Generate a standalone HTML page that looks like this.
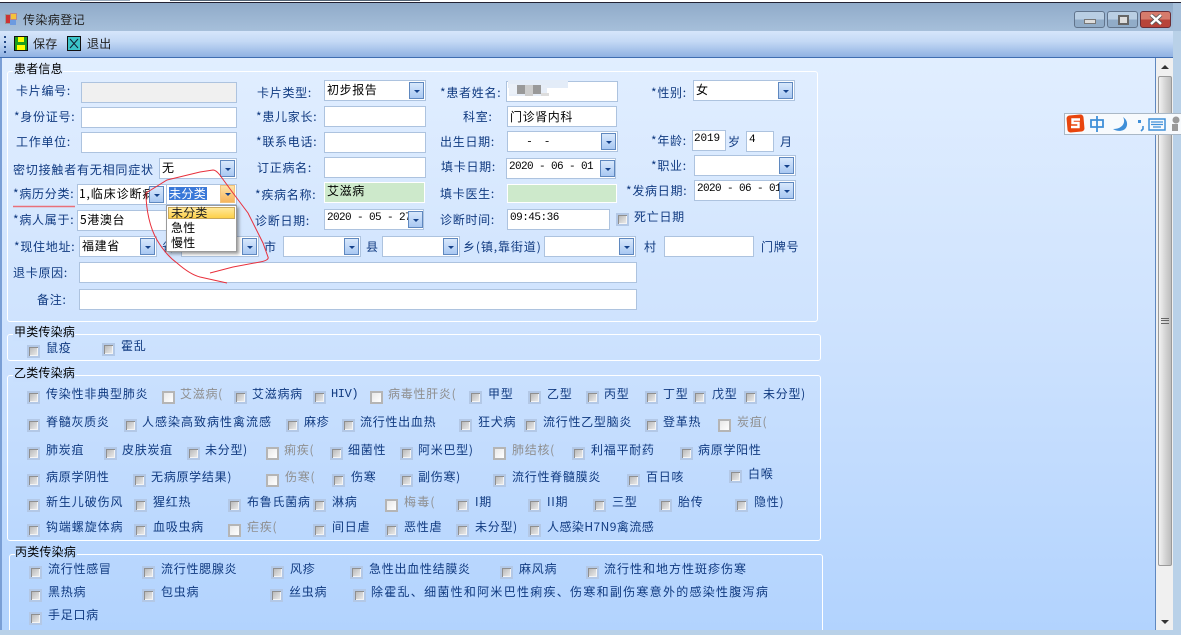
<!DOCTYPE html>
<html><head><meta charset="utf-8"><style>
html,body{margin:0;padding:0;width:1181px;height:635px;overflow:hidden;background:#b9d1e8}
body{position:relative;font:12px/14px "WenQuanYi Zen Hei","Noto Sans CJK SC",sans-serif;color:#103a80}
div,span,i,b{position:absolute;display:block;box-sizing:border-box;font-style:normal;font-weight:normal}
span{white-space:nowrap;height:14px;letter-spacing:.72px}
span.k{color:#000}
span.g{color:#8f8f8f}
.f{background:#fff;border:1px solid #adc3df;color:#000;padding:0 0 0 2px;white-space:nowrap;overflow:hidden;letter-spacing:.6px;line-height:17px}
.m{letter-spacing:-.6px;font-family:'Liberation Mono',monospace;font-size:11px}
.a{width:15px;height:17px;background:linear-gradient(#d8e8fc,#a9c8f2);border:1px solid #5f88bf}
.a:after{content:"";position:absolute;left:4px;top:7px;border:3px solid transparent;border-top:3px solid #15428b;border-bottom:0}
.o{background:linear-gradient(#fde3a8,#f6b45c);border-color:#f0c27c}
.c{width:13px;height:13px;border:2px solid #b3c8e6;background:linear-gradient(135deg,#b4b4b4,#efefef);box-shadow:inset 1px 1px 0 #8f8f8f,inset -1px -1px 0 #f4f4f4}
.d{width:13px;height:13px;border:2px solid #b5b5b5;background:linear-gradient(135deg,#e8e8e8,#fff)}
.gb{border:1px solid #fff;border-radius:3px}
.lg{background:#cfe3fe;height:13px}
</style></head><body>
<div style="left:0;top:0;width:1181px;height:2px;background:#fff"></div>
<div style="left:80px;top:0;width:50px;height:1px;background:#9ab"></div>
<div style="left:170px;top:0;width:250px;height:1px;background:#567"></div>
<div style="left:0;top:2px;width:1181px;height:1px;background:#223"></div>
<div style="left:0;top:3px;width:1181px;height:28px;background:linear-gradient(#90abc9,#a6bfda)"></div>
<div style="left:5px;top:14px;width:6px;height:10px;background:#c33;border:1px solid #999"></div>
<div style="left:10px;top:13px;width:7px;height:7px;background:#f5c33b;border:1px solid #b88"></div>
<div style="left:10px;top:20px;width:6px;height:5px;background:#6c9be0"></div>
<span style="left:23px;top:13px;color:#222;letter-spacing:.4px">传染病登记</span>
<div style="left:1074px;top:11px;width:31px;height:17px;border:1px solid #61748c;border-radius:3px;background:linear-gradient(#b9cee3 50%,#91acc8 50%)"><i style="left:9px;top:7px;width:12px;height:5px;background:#ddd;border:1px solid #777"></i></div>
<div style="left:1107px;top:11px;width:31px;height:17px;border:1px solid #61748c;border-radius:3px;background:linear-gradient(#b9cee3 50%,#91acc8 50%)"><i style="left:10px;top:3px;width:11px;height:10px;background:#ddd;border:2px solid #666"></i></div>
<div style="left:1140px;top:11px;width:31px;height:17px;border:1px solid #6b2d36;border-radius:3px;background:linear-gradient(#d67b6c 50%,#b8443a 50%)"></div>
<svg style="position:absolute;left:1149px;top:14px" width="14" height="11"><path d="M2 1L12 10M12 1L2 10" stroke="#555" stroke-width="4"/><path d="M2 1L12 10M12 1L2 10" stroke="#fff" stroke-width="2.4"/></svg>

<div style="left:0;top:31px;width:1174px;height:27px;background:linear-gradient(#d6e6fb,#c4d9f5 40%,#8fb1e2);border-bottom:1px solid #3f6db0"></div>
<div style="left:4px;top:36px;width:2px;height:2px;background:#244a88;box-shadow:0 5px #244a88,0 10px #244a88,0 15px #244a88"></div>
<div style="left:14px;top:36px;width:14px;height:15px;background:#1c9e1c;border:1px solid #111"><i style="left:3px;top:0;width:6px;height:5px;background:#ff0"></i><i style="left:2px;top:8px;width:8px;height:5px;background:#ff0"></i></div>
<span style="left:33px;top:37px;color:#222;letter-spacing:.3px">保存</span>
<div style="left:67px;top:36px;width:14px;height:15px;background:#3cc4c8;border:1px solid #111"></div>
<svg style="position:absolute;left:69px;top:38px" width="10" height="11"><path d="M1 1L9 10M9 1L1 10" stroke="#123" stroke-width="1"/></svg>
<span style="left:87px;top:37px;color:#222;letter-spacing:.3px">退出</span>

<div style="left:0;top:58px;width:1156px;height:572px;background:linear-gradient(#e1eeff,#cfe3fe 45%,#b2d3fe);border-left:2px solid #7a9fd6;border-right:1px solid #5f88c0"></div>
<div style="left:1156px;top:58px;width:17px;height:572px;background:#f0f0f0"></div>
<div style="left:1161px;top:65px;border:4px solid transparent;border-bottom:4px solid #333;border-top:0"></div>
<div style="left:1158px;top:76px;width:14px;height:490px;border:1px solid #9a9a9a;border-radius:2px;background:linear-gradient(90deg,#f2f2f2,#d0d0d0 60%,#bdbdbd)"></div>
<div style="left:1161px;top:318px;width:8px;height:6px;border-top:1px solid #666;border-bottom:1px solid #666"><i style="left:0;top:1px;width:8px;height:1px;background:#666"></i></div>
<div style="left:1161px;top:620px;border:4px solid transparent;border-top:4px solid #333;border-bottom:0"></div>

<div class="gb" style="left:7px;top:71px;width:811px;height:251px"></div>
<div class="lg" style="left:13px;top:65px;width:50px;background:#deecff"></div>
<span class="k" style="left:14px;top:62px;letter-spacing:.2px">患者信息</span>

<span style="left:16px;top:84px">卡片编号:</span><div class="f" style="left:81px;top:82px;width:156px;height:21px;background:#f0f0f0"></div>
<span style="left:257px;top:86px">卡片类型:</span><div class="f" style="left:324px;top:80px;width:102px;height:21px">初步报告<i class="a" style="left:84px;top:1px"></i></div>
<span style="left:440px;top:86px">*患者姓名:</span><div class="f" style="left:506px;top:81px;width:112px;height:21px"></div>
<div style="left:508px;top:80px;width:60px;height:8px;background:#e3ecf8"></div><div style="left:509px;top:85px;width:38px;height:11px;background:#e6edf7"></div>
<div style="left:509px;top:84px;width:8px;height:10px;background:#eaf0f8"></div>
<div style="left:517px;top:85px;width:8px;height:9px;background:#999"></div><div style="left:525px;top:85px;width:8px;height:11px;background:#ccc"></div><div style="left:533px;top:85px;width:8px;height:9px;background:#999"></div><div style="left:541px;top:93px;width:8px;height:3px;background:#ddd"></div>
<span style="left:651px;top:86px">*性别:</span><div class="f" style="left:693px;top:80px;width:102px;height:21px">女<i class="a" style="left:84px;top:1px"></i></div>

<span style="left:14px;top:110px">*身份证号:</span><div class="f" style="left:81px;top:107px;width:156px;height:21px"></div>
<span style="left:256px;top:110px">*患儿家长:</span><div class="f" style="left:324px;top:106px;width:102px;height:21px"></div>
<span style="left:463px;top:110px">科室:</span><div class="f" style="left:507px;top:106px;width:110px;height:21px;line-height:19px">门诊肾内科</div>

<span style="left:16px;top:135px">工作单位:</span><div class="f" style="left:81px;top:132px;width:156px;height:21px"></div>
<span style="left:256px;top:135px">*联系电话:</span><div class="f" style="left:324px;top:132px;width:102px;height:21px"></div>
<span style="left:440px;top:135px">出生日期:</span><div class="f" style="left:507px;top:131px;width:111px;height:21px;padding-left:14px;letter-spacing:0">&nbsp;&nbsp;-&nbsp;&nbsp;&nbsp;&nbsp;&nbsp;-<i class="a" style="left:93px;top:1px"></i></div>
<span style="left:651px;top:134px">*年龄:</span><div class="f m" style="left:692px;top:130px;width:34px;height:21px;letter-spacing:-.1px;padding-left:1px">2019</div>
<span style="left:728px;top:135px">岁</span><div class="f m" style="left:746px;top:131px;width:28px;height:21px">4</div><span style="left:780px;top:135px">月</span>

<span style="left:13px;top:163px;letter-spacing:.8px">密切接触者有无相同症状</span><div class="f" style="left:159px;top:158px;width:78px;height:21px">无<i class="a" style="left:60px;top:1px"></i></div>
<span style="left:257px;top:161px">订正病名:</span><div class="f" style="left:324px;top:157px;width:102px;height:21px"></div>
<span style="left:441px;top:160px">填卡日期:</span><div class="f m" style="left:506px;top:158px;width:110px;height:21px">2020 - 06 - 01<i class="a" style="left:93px;top:1px"></i></div>
<span style="left:651px;top:159px">*职业:</span><div class="f" style="left:694px;top:155px;width:102px;height:21px"><i class="a" style="left:84px;top:1px"></i></div>

<span style="left:13px;top:187px">*病历分类:</span><div class="f" style="left:77px;top:184px;width:90px;height:21px;line-height:18px;padding-left:1px;letter-spacing:.9px">1,临床诊断病<i class="a" style="left:71px;top:1px"></i></div>
<div class="f" style="left:166px;top:184px;width:71px;height:21px;padding:0"></div>
<span style="left:169px;top:187px;background:#3a78d8;color:#fff;letter-spacing:.4px;width:38px;height:13px">未分类</span>
<i class="a o" style="left:220px;top:185px;height:18px"></i>
<span style="left:255px;top:188px">*疾病名称:</span><div class="f" style="left:324px;top:182px;width:101px;height:21px;background:#cde9cb;border-color:#fff;line-height:15px">艾滋病</div>
<span style="left:440px;top:187px">填卡医生:</span><div class="f" style="left:507px;top:184px;width:110px;height:19px;background:#cde9cb;border-color:#fff"></div>
<span style="left:626px;top:184px">*发病日期:</span><div class="f m" style="left:694px;top:180px;width:102px;height:21px">2020 - 06 - 01<i class="a" style="left:84px;top:1px"></i></div>

<span style="left:13px;top:213px">*病人属于:</span><div class="f" style="left:77px;top:210px;width:90px;height:21px">5港澳台</div>
<span style="left:255px;top:214px">诊断日期:</span><div class="f m" style="left:324px;top:209px;width:100px;height:21px">2020 - 05 - 27<i class="a" style="left:83px;top:1px"></i></div>
<span style="left:440px;top:213px">诊断时间:</span><div class="f m" style="left:507px;top:209px;width:103px;height:21px;letter-spacing:-.5px">09:45:36</div>
<i class="c" style="left:616px;top:213px"></i><span style="left:634px;top:210px">死亡日期</span>

<span style="left:14px;top:240px">*现住地址:</span><div class="f" style="left:79px;top:236px;width:78px;height:21px">福建省<i class="a" style="left:60px;top:1px"></i></div>
<span style="left:162px;top:240px">省</span><div class="f" style="left:181px;top:236px;width:78px;height:21px"><i class="a" style="left:60px;top:1px"></i></div>
<span style="left:264px;top:240px">市</span><div class="f" style="left:283px;top:236px;width:78px;height:21px"><i class="a" style="left:60px;top:1px"></i></div>
<span style="left:366px;top:240px">县</span><div class="f" style="left:382px;top:236px;width:78px;height:21px"><i class="a" style="left:60px;top:1px"></i></div>
<span style="left:463px;top:240px;letter-spacing:.9px">乡(镇,靠街道)</span><div class="f" style="left:544px;top:236px;width:92px;height:21px"><i class="a" style="left:74px;top:1px"></i></div>
<span style="left:644px;top:240px">村</span><div class="f" style="left:664px;top:236px;width:90px;height:21px"></div><span style="left:761px;top:240px">门牌号</span>

<span style="left:13px;top:266px">退卡原因:</span><div class="f" style="left:79px;top:262px;width:558px;height:21px"></div>
<span style="left:37px;top:293px">备注:</span><div class="f" style="left:79px;top:289px;width:558px;height:21px"></div>

<div style="left:166px;top:205px;width:71px;height:47px;background:#fff;border:1px solid #9a9a9a;box-shadow:2px 2px 3px rgba(60,60,60,.5)"></div>
<div style="left:168px;top:207px;width:67px;height:12px;background:linear-gradient(#ffe89a,#fdd049);border:1px solid #c9a85a"></div>
<span class="k" style="left:171px;top:206px;letter-spacing:.2px;color:#222">未分类</span><span class="k" style="left:171px;top:221px;letter-spacing:.2px">急性</span><span class="k" style="left:171px;top:236px;letter-spacing:.2px">慢性</span>

<svg style="position:absolute;left:0;top:0" width="400" height="320" fill="none"><path d="M13 206.500H75" stroke="#e9707a" stroke-width="1.6"/><path d="M210 273L233 267L260 262C266 261 269 259 268 257L263 243L248 213L233 193L222 178C218 172 215 170 213 170L200 172L167 180L146 193C146 210 150 228 157 240C163 250 170 258 177 263C185 270 192 275 200 277L227 283" stroke="#e8303c" stroke-width="1"/></svg>

<div class="gb" style="left:7px;top:334px;width:814px;height:27px"></div>
<div class="lg" style="left:13px;top:328px;width:62px;background:#cbe1fe"></div>
<span class="k" style="left:14px;top:325px;letter-spacing:.2px">甲类传染病</span>
<i class="c" style="left:27px;top:345px"></i><span style="left:46px;top:341px">鼠疫</span>
<i class="c" style="left:102px;top:343px"></i><span style="left:121px;top:339px">霍乱</span>

<div class="gb" style="left:7px;top:375px;width:814px;height:166px"></div>
<div class="lg" style="left:13px;top:369px;width:62px;background:#c8dffe"></div>
<span class="k" style="left:14px;top:366px;letter-spacing:.2px">乙类传染病</span>

<i class="c" style="left:27px;top:391px"></i><span style="left:46px;top:387px;letter-spacing:.8px">传染性非典型肺炎</span>
<i class="d" style="left:162px;top:391px"></i><span class="g" style="left:180px;top:387px">艾滋病(</span>
<i class="c" style="left:234px;top:391px"></i><span style="left:252px;top:387px">艾滋病病</span>
<i class="c" style="left:313px;top:391px"></i><span style="left:331px;top:387px;letter-spacing:-.4px;font-family:'Liberation Mono',monospace">HIV)</span>
<i class="d" style="left:370px;top:391px"></i><span class="g" style="left:388px;top:387px">病毒性肝炎(</span>
<i class="c" style="left:469px;top:391px"></i><span style="left:488px;top:387px">甲型</span>
<i class="c" style="left:528px;top:391px"></i><span style="left:547px;top:387px">乙型</span>
<i class="c" style="left:586px;top:391px"></i><span style="left:604px;top:387px">丙型</span>
<i class="c" style="left:645px;top:391px"></i><span style="left:663px;top:387px">丁型</span>
<i class="c" style="left:693px;top:391px"></i><span style="left:712px;top:387px">戊型</span>
<i class="c" style="left:744px;top:391px"></i><span style="left:763px;top:387px">未分型)</span>

<i class="c" style="left:27px;top:419px"></i><span style="left:46px;top:415px">脊髓灰质炎</span>
<i class="c" style="left:124px;top:419px"></i><span style="left:142px;top:415px;letter-spacing:1px">人感染高致病性禽流感</span>
<i class="c" style="left:286px;top:419px"></i><span style="left:304px;top:415px">麻疹</span>
<i class="c" style="left:342px;top:419px"></i><span style="left:360px;top:415px">流行性出血热</span>
<i class="c" style="left:459px;top:419px"></i><span style="left:478px;top:415px">狂犬病</span>
<i class="c" style="left:524px;top:419px"></i><span style="left:543px;top:415px">流行性乙型脑炎</span>
<i class="c" style="left:645px;top:419px"></i><span style="left:663px;top:415px">登革热</span>
<i class="d" style="left:718px;top:419px"></i><span class="g" style="left:737px;top:415px">炭疽(</span>

<i class="c" style="left:27px;top:447px"></i><span style="left:46px;top:443px">肺炭疽</span>
<i class="c" style="left:104px;top:447px"></i><span style="left:122px;top:443px">皮肤炭疽</span>
<i class="c" style="left:187px;top:447px"></i><span style="left:205px;top:443px">未分型)</span>
<i class="d" style="left:266px;top:447px"></i><span class="g" style="left:284px;top:443px">痢疾(</span>
<i class="c" style="left:330px;top:447px"></i><span style="left:348px;top:443px">细菌性</span>
<i class="c" style="left:400px;top:447px"></i><span style="left:418px;top:443px">阿米巴型)</span>
<i class="d" style="left:493px;top:447px"></i><span class="g" style="left:512px;top:443px">肺结核(</span>
<i class="c" style="left:572px;top:447px"></i><span style="left:591px;top:443px">利福平耐药</span>
<i class="c" style="left:680px;top:447px"></i><span style="left:698px;top:443px">病原学阳性</span>

<i class="c" style="left:27px;top:474px"></i><span style="left:46px;top:470px">病原学阴性</span>
<i class="c" style="left:133px;top:474px"></i><span style="left:151px;top:470px">无病原学结果)</span>
<i class="d" style="left:266px;top:474px"></i><span class="g" style="left:285px;top:470px">伤寒(</span>
<i class="c" style="left:332px;top:474px"></i><span style="left:351px;top:470px">伤寒</span>
<i class="c" style="left:400px;top:474px"></i><span style="left:418px;top:470px">副伤寒)</span>
<i class="c" style="left:493px;top:474px"></i><span style="left:512px;top:470px">流行性脊髓膜炎</span>
<i class="c" style="left:627px;top:474px"></i><span style="left:646px;top:470px">百日咳</span>
<i class="c" style="left:729px;top:470px"></i><span style="left:748px;top:467px">白喉</span>

<i class="c" style="left:27px;top:499px"></i><span style="left:46px;top:495px;letter-spacing:.9px">新生儿破伤风</span>
<i class="c" style="left:134px;top:499px"></i><span style="left:153px;top:495px">猩红热</span>
<i class="c" style="left:228px;top:499px"></i><span style="left:247px;top:495px">布鲁氏菌病</span>
<i class="c" style="left:313px;top:499px"></i><span style="left:332px;top:495px">淋病</span>
<i class="d" style="left:385px;top:499px"></i><span class="g" style="left:404px;top:495px;letter-spacing:1.2px">梅毒(</span>
<i class="c" style="left:456px;top:499px"></i><span style="left:475px;top:495px">I期</span>
<i class="c" style="left:528px;top:499px"></i><span style="left:547px;top:495px">II期</span>
<i class="c" style="left:593px;top:499px"></i><span style="left:612px;top:495px">三型</span>
<i class="c" style="left:659px;top:499px"></i><span style="left:678px;top:495px">胎传</span>
<i class="c" style="left:735px;top:499px"></i><span style="left:754px;top:495px">隐性)</span>

<i class="c" style="left:27px;top:524px"></i><span style="left:46px;top:520px;letter-spacing:.9px">钩端螺旋体病</span>
<i class="c" style="left:134px;top:524px"></i><span style="left:153px;top:520px">血吸虫病</span>
<i class="d" style="left:228px;top:524px"></i><span class="g" style="left:247px;top:520px">疟疾(</span>
<i class="c" style="left:313px;top:524px"></i><span style="left:332px;top:520px">间日虐</span>
<i class="c" style="left:385px;top:524px"></i><span style="left:404px;top:520px">恶性虐</span>
<i class="c" style="left:456px;top:524px"></i><span style="left:475px;top:520px">未分型)</span>
<i class="c" style="left:528px;top:524px"></i><span style="left:547px;top:520px;letter-spacing:.45px">人感染H7N9禽流感</span>

<div class="gb" style="left:9px;top:554px;width:814px;height:90px"></div>
<div class="lg" style="left:15px;top:548px;width:62px;background:#b9d7fe"></div>
<span class="k" style="left:15px;top:545px;letter-spacing:.2px">丙类传染病</span>
<i class="c" style="left:29px;top:566px"></i><span style="left:48px;top:562px">流行性感冒</span>
<i class="c" style="left:142px;top:566px"></i><span style="left:161px;top:562px">流行性腮腺炎</span>
<i class="c" style="left:271px;top:566px"></i><span style="left:290px;top:562px">风疹</span>
<i class="c" style="left:350px;top:566px"></i><span style="left:369px;top:562px">急性出血性结膜炎</span>
<i class="c" style="left:500px;top:566px"></i><span style="left:519px;top:562px">麻风病</span>
<i class="c" style="left:586px;top:566px"></i><span style="left:604px;top:562px;letter-spacing:1px">流行性和地方性斑疹伤寒</span>
<i class="c" style="left:29px;top:589px"></i><span style="left:48px;top:585px">黑热病</span>
<i class="c" style="left:142px;top:589px"></i><span style="left:161px;top:585px">包虫病</span>
<i class="c" style="left:270px;top:589px"></i><span style="left:289px;top:585px">丝虫病</span>
<i class="c" style="left:353px;top:589px"></i><span style="left:371px;top:585px;letter-spacing:1.27px">除霍乱、细菌性和阿米巴性痢疾、伤寒和副伤寒意外的感染性腹泻病</span>
<i class="c" style="left:29px;top:612px"></i><span style="left:48px;top:608px">手足口病</span>

<div style="left:0;top:630px;width:1181px;height:5px;background:#b9d1e8"></div>
<div style="left:1173px;top:3px;width:8px;height:632px;background:#b9d1e8"></div>
<div style="left:1173px;top:3px;width:8px;height:28px;background:#a6bfda"></div>

<div style="left:1064px;top:113px;width:117px;height:22px;background:#f7fafd;border:1px solid #aab8c6;border-right:0"></div>
<div style="left:1067px;top:115px;width:17px;height:17px;background:#e8450e;border-radius:3px;transform:rotate(-5deg)"></div>
<svg style="position:absolute;left:1069px;top:117px" width="13" height="13" fill="none"><path d="M11 2.500H3.500V6H9.500V10H2" stroke="#fff" stroke-width="2.4"/></svg>
<svg style="position:absolute;left:1088px;top:114px" width="93" height="20" fill="none"><path d="M3 6H15V13H3ZM9 2V18" stroke="#3f8fd8" stroke-width="1.8"/><path d="M35 3C38 8 35 15 25 15C29 18 38 18 39 11C39.500 8 38 5 35 3Z" fill="#3f8fd8"/><rect x="50" y="6" width="3" height="3" fill="#3f8fd8"/><path d="M55 12V15L53 17" stroke="#3f8fd8" stroke-width="1.6"/><rect x="61" y="5" width="16" height="11" stroke="#3f8fd8" stroke-width="1.5"/><path d="M63 8H75M63 10.500H75M65 13H73" stroke="#3f8fd8" stroke-width="1.2"/><circle cx="88" cy="6" r="3.500" fill="#9a9a9a"/><rect x="84" y="10" width="6" height="7" fill="#9a9a9a"/></svg>
</body></html>
